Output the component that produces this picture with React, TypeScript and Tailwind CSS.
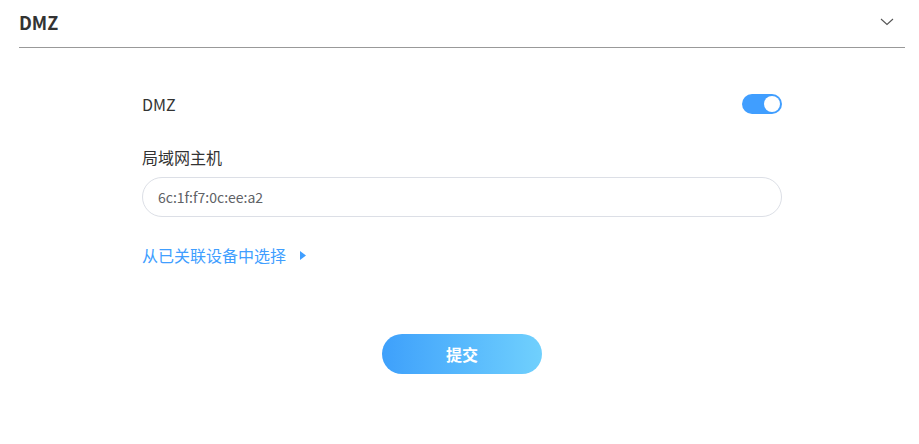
import React from "react";

export default function App() {
  return (
    <div className="w-[919px] h-[444px] bg-white" style={{ fontFamily: '"Noto Sans CJK SC", "Noto Sans", sans-serif' }}>
      <div className="mx-[19px] mr-[14px] h-[48px] flex items-center justify-between border-b border-[#999999] pb-[1px]">
        <span className="text-[18px] font-bold text-[#333333] leading-none -mt-[2px]">DMZ</span>
        <svg width="14" height="8" viewBox="0 0 14 8" className="mr-[11px] -mt-[2px]">
          <path d="M1 1 L7 6.5 L13 1" fill="none" stroke="#555" strokeWidth="1.1" />
        </svg>
      </div>
      <div className="w-[640px] ml-[142px] flex flex-col">
        <div className="mt-[46px] h-[20px] flex items-center justify-between">
          <span className="text-[16px] text-[#333333] leading-none">DMZ</span>
          <div className="w-[40px] h-[20px] rounded-full bg-[#409eff] flex items-center justify-end pr-[2px]">
            <div className="w-[16px] h-[16px] rounded-full bg-white" />
          </div>
        </div>
        <div className="mt-[33px] text-[16px] text-[#333333] leading-[20px]">局域网主机</div>
        <div className="mt-[10px] h-[40px] rounded-full border border-[#dcdfe6] flex items-center px-[15px] text-[14px] text-[#606266]">
          6c:1f:f7:0c:ee:a2
        </div>
        <div className="mt-[28px] flex items-center text-[16px] text-[#409eff] leading-[20px]">
          <span>从已关联设备中选择</span>
          <svg width="6" height="9" viewBox="0 0 6 9" className="ml-[14px]">
            <path d="M0 0 L6 4.5 L0 9 Z" fill="#409eff" />
          </svg>
        </div>
        <div className="mt-[69px] flex justify-center">
          <button className="w-[160px] h-[40px] rounded-full bg-gradient-to-r from-[#3ea0fb] to-[#70d0fd] text-white text-[16px] font-bold">
            提交
          </button>
        </div>
      </div>
    </div>
  );
}
